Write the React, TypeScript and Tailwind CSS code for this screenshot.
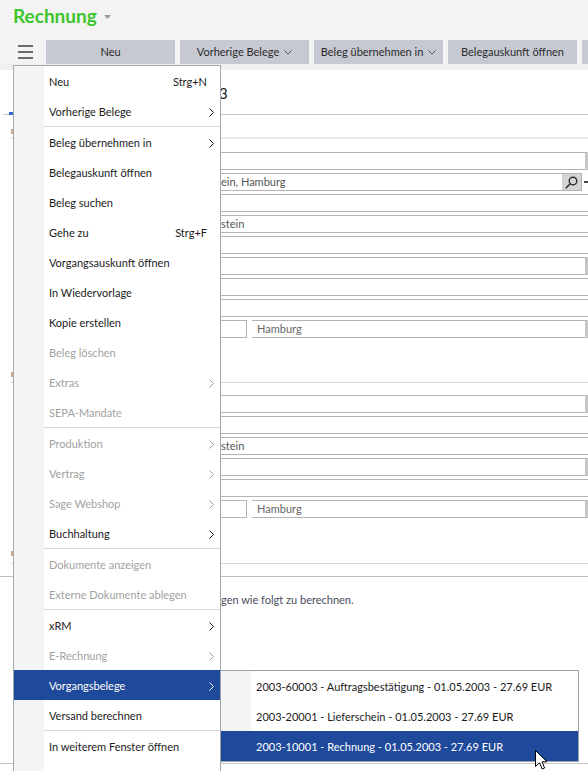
import type { ReactNode } from 'react'

type MenuEntry =
  | { kind: 'item'; label: string; shortcut?: string; sub?: boolean; disabled?: boolean; active?: boolean }
  | { kind: 'sep' }

const menu: MenuEntry[] = [
  { kind: 'item', label: 'Neu', shortcut: 'Strg+N' },
  { kind: 'item', label: 'Vorherige Belege', sub: true },
  { kind: 'sep' },
  { kind: 'item', label: 'Beleg übernehmen in', sub: true },
  { kind: 'item', label: 'Belegauskunft öffnen' },
  { kind: 'item', label: 'Beleg suchen' },
  { kind: 'item', label: 'Gehe zu', shortcut: 'Strg+F' },
  { kind: 'item', label: 'Vorgangsauskunft öffnen' },
  { kind: 'item', label: 'In Wiedervorlage' },
  { kind: 'item', label: 'Kopie erstellen' },
  { kind: 'item', label: 'Beleg löschen', disabled: true },
  { kind: 'item', label: 'Extras', sub: true, disabled: true },
  { kind: 'item', label: 'SEPA-Mandate', disabled: true },
  { kind: 'sep' },
  { kind: 'item', label: 'Produktion', sub: true, disabled: true },
  { kind: 'item', label: 'Vertrag', sub: true, disabled: true },
  { kind: 'item', label: 'Sage Webshop', sub: true, disabled: true },
  { kind: 'item', label: 'Buchhaltung', sub: true },
  { kind: 'sep' },
  { kind: 'item', label: 'Dokumente anzeigen', disabled: true },
  { kind: 'item', label: 'Externe Dokumente ablegen', disabled: true },
  { kind: 'sep' },
  { kind: 'item', label: 'xRM', sub: true },
  { kind: 'item', label: 'E-Rechnung', sub: true, disabled: true },
  { kind: 'item', label: 'Vorgangsbelege', sub: true, active: true },
  { kind: 'item', label: 'Versand berechnen' },
  { kind: 'sep' },
  { kind: 'item', label: 'In weiterem Fenster öffnen' },
]

const belege = [
  { text: '2003-60003 - Auftragsbestätigung - 01.05.2003 - 27.69 EUR' },
  { text: '2003-20001 - Lieferschein - 01.05.2003 - 27.69 EUR' },
  { text: '2003-10001 - Rechnung - 01.05.2003 - 27.69 EUR', active: true },
]

function Chevron() {
  return (
    <svg width="5" height="9" viewBox="0 0 5 9" className="shrink-0">
      <path d="M0.5 0.5 L4.5 4.5 L0.5 8.5" fill="none" stroke="currentColor" strokeWidth="1" />
    </svg>
  )
}

function DropCaret() {
  return (
    <svg width="8" height="5" viewBox="0 0 8 5" className="ml-[5px] shrink-0">
      <path d="M0.5 0.5 L4 4 L7.5 0.5" fill="none" stroke="#555" strokeWidth="1" />
    </svg>
  )
}

function ToolButton({ label, caret }: { label?: string; caret?: boolean }) {
  return (
    <div className="flex w-[129px] shrink-0 items-center justify-center bg-[#c6c9d2] text-[11px] text-[#2b2b2b]">
      {label}
      {caret && <DropCaret />}
    </div>
  )
}

// the form starts right of the open menu, so boxes have no left edge here
function Field({ children, className = '' }: { children?: ReactNode; className?: string }) {
  return (
    <div className={`flex h-[18px] shrink-0 items-center border border-l-0 border-[#b3b3b3] bg-white text-[11px] text-[#555] ${className}`}>
      {children}
    </div>
  )
}

function WideRow({ children }: { children?: ReactNode }) {
  return (
    <div className="flex pl-[221px]">
      <Field className="w-[375px]">{children}</Field>
    </div>
  )
}

// box ending at the page edge with the grey grip on its right
function GripRow({ children }: { children?: ReactNode }) {
  return (
    <div className="flex pl-[221px]">
      <Field className="w-[367px] border-r-[3px] border-r-[#c6c6c6]">{children}</Field>
    </div>
  )
}

function CityRow() {
  return (
    <div className="flex gap-[5px] pl-[221px]">
      <Field className="w-[26px]" />
      <Field className="w-[336px] border-l border-r-[3px] border-r-[#c6c6c6] pl-[5px] text-[#666]">Hamburg</Field>
    </div>
  )
}

function SectionHead({ gap, lineGap, light }: { gap: string; lineGap: string; light?: boolean }) {
  return (
    <div className={`flex flex-col pl-[11px] ${gap}`}>
      <div className="h-[5px] w-[2px] bg-[#c9a98f]" />
      <div className={`${lineGap} ${light ? 'h-[2px] bg-[#e9e9e9]' : 'h-px bg-[#d6d6d6]'}`} />
    </div>
  )
}

function SearchIcon() {
  return (
    <svg width="13" height="13" viewBox="0 0 13 13">
      <circle cx="8" cy="5" r="3.8" fill="none" stroke="#333" strokeWidth="1.4" />
      <path d="M5.2 7.8 L1.2 11.8" stroke="#333" strokeWidth="1.6" strokeLinecap="round" />
    </svg>
  )
}

function ContextMenu() {
  return (
    <div className="absolute left-[13px] top-[65px] flex h-[720px] w-[208px] flex-col border border-[#a3a7ae] bg-white text-[11px]">
      {menu.map((entry, i) => {
        if (entry.kind === 'sep') {
          return (
            <div key={i} className="flex h-px shrink-0">
              <div className="w-[30px] bg-[#f4f4f4]" />
              <div className="flex-1 bg-[#d9d9d9]" />
            </div>
          )
        }
        const tone = entry.active ? 'text-white' : entry.disabled ? 'text-[#a2a2a2]' : 'text-[#1b1b1b]'
        return (
          <div key={i} className={`flex h-[30px] shrink-0 ${entry.active ? 'bg-[#1f4a9b]' : ''} ${tone}`}>
            <div className={`w-[30px] shrink-0 ${entry.active ? '' : 'bg-[#f4f4f4]'}`} />
            <div className="flex flex-1 items-center pl-[5px] pr-[6px] pt-[3px]">
              <span className="flex-1 whitespace-nowrap">{entry.label}</span>
              {entry.shortcut && <span className="pr-[7px]">{entry.shortcut}</span>}
              {entry.sub && <Chevron />}
            </div>
          </div>
        )
      })}
      <div className="flex flex-1">
        <div className="w-[30px] bg-[#f4f4f4]" />
      </div>
    </div>
  )
}

function BelegMenu() {
  return (
    <div className="absolute left-[220px] top-[670px] flex w-[359px] flex-col border border-[#9ca1a9] bg-white text-[11px]">
      {belege.map((b) => (
        <div key={b.text} className={`flex h-[30px] ${b.active ? 'bg-[#1f4a9b] text-white' : 'text-[#1b1b1b]'}`}>
          <div className={`w-[30px] shrink-0 ${b.active ? '' : 'bg-[#f4f4f4]'}`} />
          <div className="flex items-center whitespace-nowrap pl-[5px] pt-[2px]">{b.text}</div>
        </div>
      ))}
    </div>
  )
}

function Pointer() {
  return (
    <svg width="14" height="21" viewBox="0 0 14 21" className="absolute left-[535px] top-[750px]">
      <path
        d="M0.5 0.5 L0.5 16.5 L4.5 12.8 L7.2 19 L9.6 18 L7 11.8 L12 11.8 Z"
        fill="#fff"
        stroke="#000"
        strokeWidth="1"
      />
    </svg>
  )
}

export default function App() {
  return (
    <div className="relative h-[771px] w-[588px] overflow-hidden bg-white font-['Lato','Noto_Sans',sans-serif]">
      {/* title */}
      <div className="flex h-[40px] items-start bg-[#f3f3f3] pl-[13px] pt-[5px]">
        <span className="text-[19px] font-bold leading-[22px] text-[#3cc52b]">Rechnung</span>
        <svg width="7" height="4" viewBox="0 0 7 4" className="ml-[7px] mt-[10px]">
          <path d="M0 0 H7 L3.5 4 Z" fill="#9c9c9c" />
        </svg>
      </div>

      {/* toolbar */}
      <div className="flex h-[24px] gap-[5px] bg-[#f3f3f3]">
        <div className="flex w-[41px] shrink-0 items-center pl-[18px]">
          <svg width="15" height="14" viewBox="0 0 15 14">
            <rect x="0" y="0" width="15" height="2" fill="#6a6a6a" />
            <rect x="0" y="6" width="15" height="2" fill="#6a6a6a" />
            <rect x="0" y="12" width="15" height="2" fill="#6a6a6a" />
          </svg>
        </div>
        <ToolButton label="Neu" />
        <ToolButton label="Vorherige Belege" caret />
        <ToolButton label="Beleg übernehmen in" caret />
        <ToolButton label="Belegauskunft öffnen" />
        <ToolButton />
      </div>
      <div className="h-[6px] bg-[#f0f0f0]" />

      {/* document form */}
      <div className="flex flex-col">
        <div className="flex h-[42px] items-center pl-[219px] pt-[4px]">
          <span className="text-[15px] text-[#222]">3</span>
        </div>
        <div className="flex h-[3px] items-end pl-[3px]">
          <div className="h-px w-[6px] bg-[#c8c8c8]" />
          <div className="h-[3px] w-[40px] bg-[#2b6ad0]" />
          <div className="h-px flex-1 bg-[#c8c8c8]" />
        </div>

        <SectionHead gap="mt-[14px]" lineGap="mt-[3px]" light />

        <div className="mt-[13px] flex flex-col gap-[3px]">
          <GripRow />
          <div className="flex pl-[221px]">
            <Field className="w-[361px]">
              <span className="whitespace-nowrap">ein, Hamburg</span>
              <div className="ml-auto flex h-full w-[19px] items-center justify-center bg-[#d4d4d4]">
                <SearchIcon />
              </div>
            </Field>
            <div className="ml-[2px] flex items-center">
              <div className="h-[2px] w-[4px] bg-[#444]" />
            </div>
          </div>
          <WideRow />
          <WideRow>stein</WideRow>
          <WideRow />
          <GripRow />
          <WideRow />
          <WideRow />
          <CityRow />
        </div>

        <SectionHead gap="mt-[34px]" lineGap="mt-[5px]" />

        <div className="mt-[12px] flex flex-col gap-[3px]">
          <GripRow />
          <WideRow />
          <WideRow>stein</WideRow>
          <GripRow />
          <WideRow />
          <CityRow />
        </div>

        <SectionHead gap="mt-[33px]" lineGap="mt-[7px]" />
        <div className="h-[13px] border-b border-[#bdbdbd]" />

        <div className="mt-[15px] whitespace-nowrap pl-[221px] text-[11px] text-[#4b4d5e]">
          gen wie folgt zu berechnen.
        </div>

        <div className="mt-[154px] h-px bg-[#c4c4c4]" />
      </div>

      <ContextMenu />
      <BelegMenu />
      <Pointer />
    </div>
  )
}
